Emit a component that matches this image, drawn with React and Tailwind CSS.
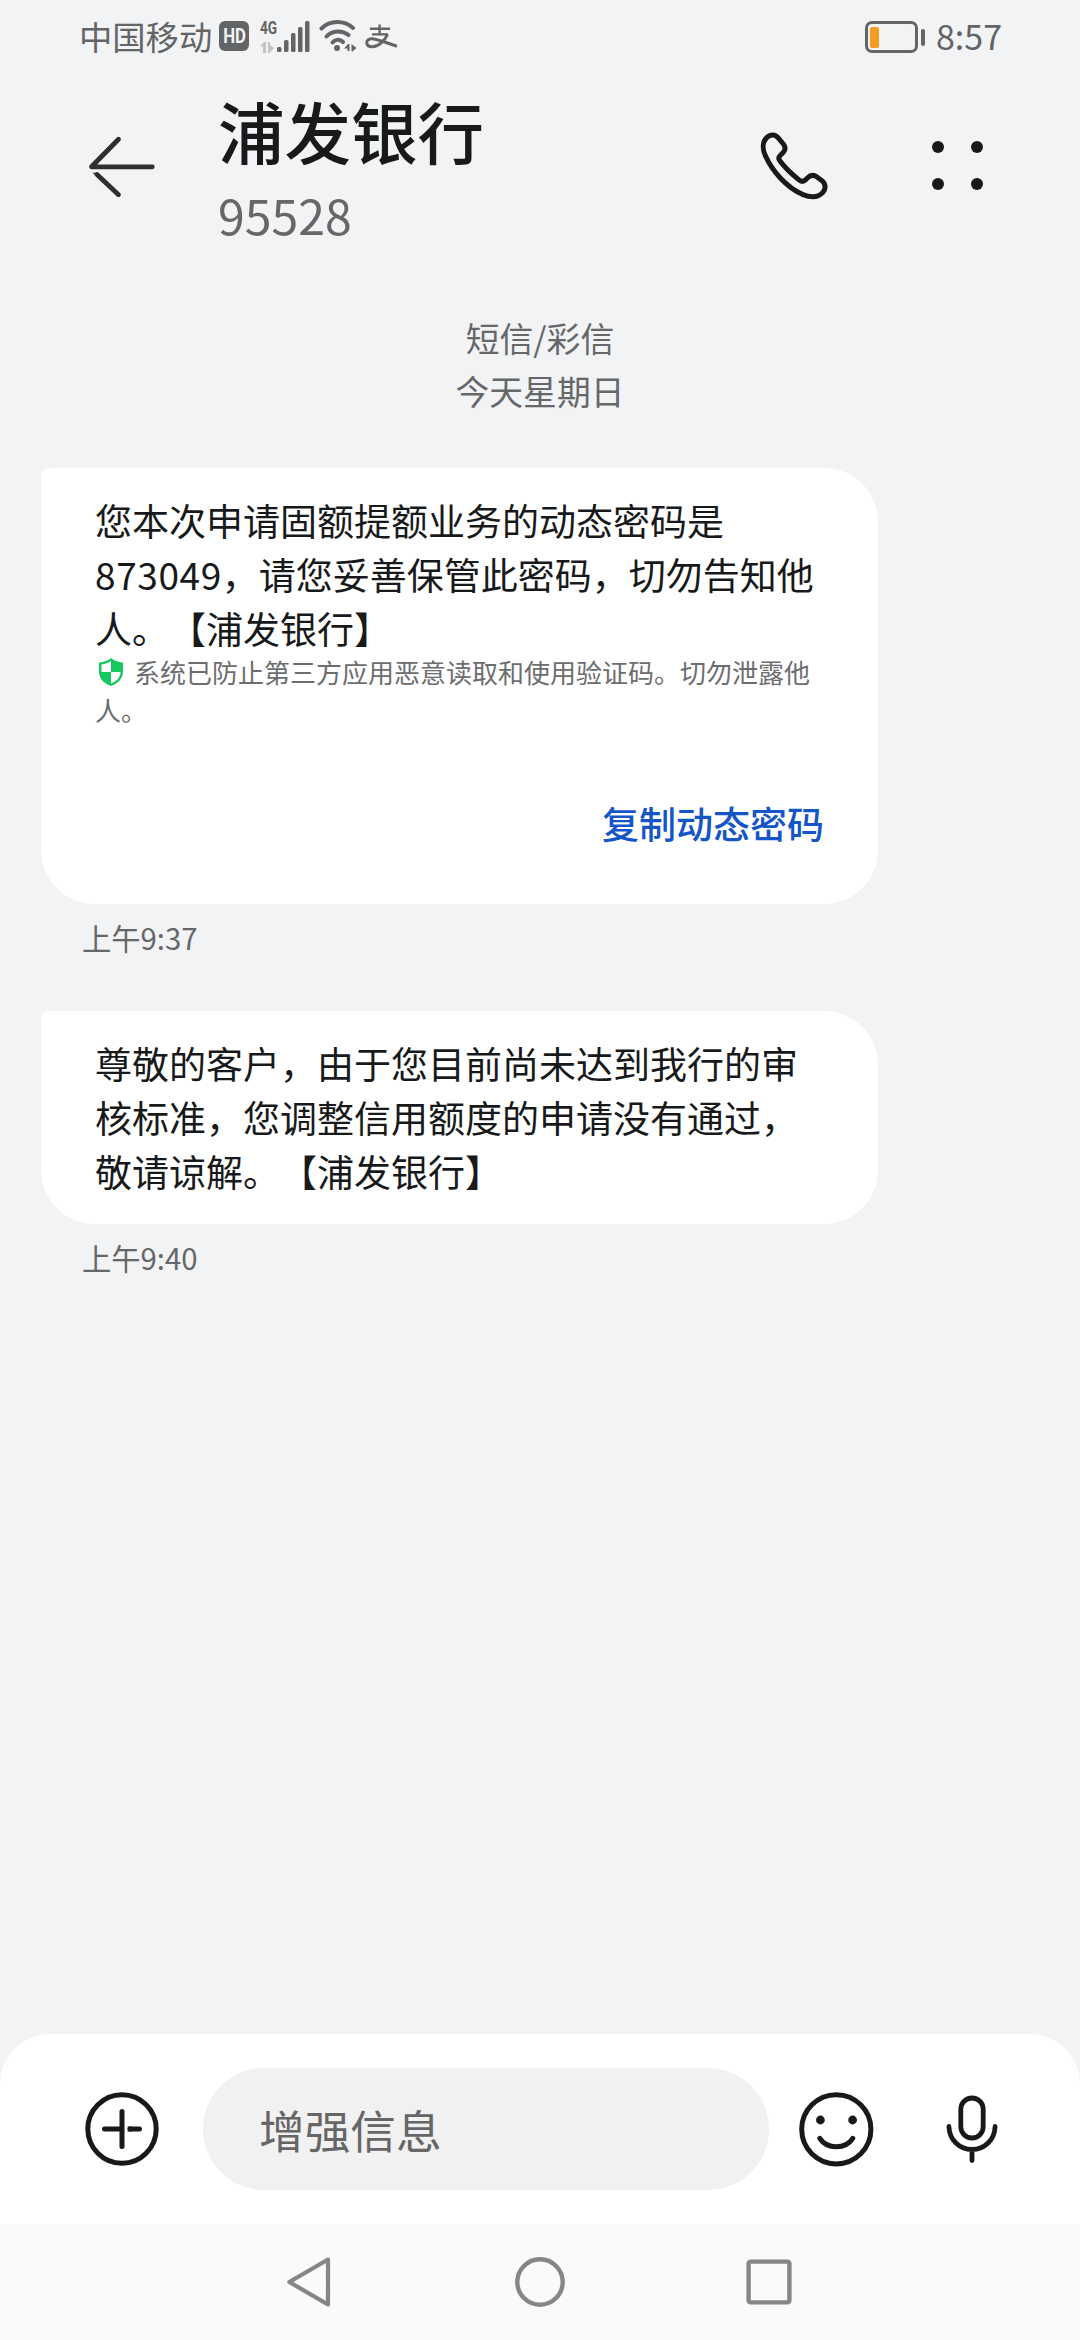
import React from 'react';

const messages = [
    {
        id: 1,
        lines: [
            '您本次申请固额提额业务的动态密码是',
            <><span className="tracking-[0.6px]">873049</span>，请您妥善保管此密码，切勿告知他</>,
            '人。【浦发银行】'
        ],
        notice: ['系统已防止第三方应用恶意读取和使用验证码。切勿泄露他', '人。'],
        action: '复制动态密码',
        time: '上午9:37'
    },
    {
        id: 2,
        lines: ['尊敬的客户，由于您目前尚未达到我行的审', '核标准，您调整信用额度的申请没有通过，', '敬请谅解。【浦发银行】'],
        time: '上午9:40'
    }
];

function StatusBar() {
    return (
        <div className="h-[74px] pl-[79px] pr-[78px] flex items-center text-[#636466]">
            <span className="-mt-[3px] text-[33.3px] leading-none whitespace-nowrap">中国移动</span>
            <span className="ml-[7px] -mt-[2px] w-[30px] h-[30px] rounded-[6px] bg-[#636466] flex items-center justify-center text-[#f1f3f5]">
                <span className="text-[20px] leading-none font-bold font-['Roboto',sans-serif] scale-x-[0.84]">HD</span>
            </span>

            {/* Mobile signal */}
            <span className="ml-[11px] w-[17px] h-[32px] flex flex-col justify-between -mt-[1px]">
                <span className="text-[18.5px] leading-[15px] font-bold font-['Roboto',sans-serif] origin-left scale-x-[0.74]">4G</span>
                <svg className="w-[14px] h-[11px]" viewBox="0 0 14 11" fill="#c2c3c4">
                    <path d="M0 4.5 L4 0 H6 V11 H3 V4.5 Z M8 0 H10 V3 L14 6 L9.5 11 H8 Z" />
                </svg>
            </span>
            <svg className="w-[34px] h-[31px] -mt-[1px]" viewBox="0 0 34 31" fill="currentColor">
                <rect x="0" y="26" width="4.5" height="5" rx="1.5" />
                <rect x="7" y="19" width="4.5" height="12" rx="1.5" />
                <rect x="14" y="12" width="4.5" height="19" rx="1.5" />
                <rect x="21" y="6" width="4.5" height="25" rx="1.5" />
                <rect x="28" y="0" width="4.5" height="31" rx="1.5" />
            </svg>

            {/* Wifi */}
            <svg className="ml-[8px] w-[38px] h-[32px] -mt-[2px]" viewBox="0 0 38 32" fill="none" stroke="currentColor" strokeWidth="4" strokeLinecap="round">
                <path d="M2.5 8.5 C11 0 25 0 34 8" />
                <path d="M7.5 16.5 C13.5 10 23 10 29.5 15" />
                <path d="M13.5 22.5 C16.5 19 21 19 24 22" />
                <circle cx="18" cy="28" r="3" fill="currentColor" stroke="none" />
                <path d="M25 28.5 L29 24 H30.5 V31 H28.5 V28.5 Z M32.5 24 L37.5 28 L33.5 31.5 H32.5 Z" fill="currentColor" stroke="none" />
            </svg>

            {/* Alipay */}
            <svg className="ml-[8px] w-[33px] h-[26px]" viewBox="0 0 33 26" fill="none" stroke="currentColor" strokeWidth="2.4">
                <path d="M5 4.8 H25 M14.6 0.5 V10 M7 10.4 H23" />
                <path d="M22.5 10.5 C20 16 14 22.5 7.5 22.8 C0 23 0 15 6.5 14.7 C12 14.6 20 18.5 32 22.2" strokeWidth="3" />
            </svg>

            <span className="ml-auto flex items-center">
                <span className="w-[53px] h-[32px] border-[3px] border-[#636466] rounded-[7px] flex items-center pl-[2px]">
                    <span className="w-[9px] h-[21px] rounded-[2px] bg-[#f59a23]" />
                </span>
                <span className="ml-[3px] w-[4px] h-[17px] rounded-[2px] bg-[#636466]" />
                <span className="ml-[11px] -mt-[2px] text-[34px] leading-none">8:57</span>
            </span>
        </div>
    );
}

function Header() {
    return (
        <header className="h-[186px] pl-[86px] pr-[97px] flex items-start text-[#18191a]">
            <svg className="mt-[60px] w-[72px] h-[66px]" viewBox="86 134 72 66" fill="none" stroke="#2d2f31" strokeWidth="4.8" strokeLinecap="round" strokeLinejoin="round">
                <path d="M118.5 139.3 L91.5 166.8 H152.3" />
                <path d="M97 174.5 L118.5 194.7" />
                <path d="M92.5 172.8 H98 L101 176 L98 177.5 Z" fill="#2d2f31" stroke="none" />
            </svg>
            <div className="ml-[60px]">
                <h1 className="mt-[11px] text-[66.5px] leading-[90px] font-medium">浦发银行</h1>
                <p className="mt-[6px] text-[48.2px] leading-[66px] text-[#666769]">95528</p>
            </div>
            <svg className="ml-auto mt-[57px] w-[70px] h-[70px]" viewBox="88 94 210 210" fill="none" stroke="currentColor" strokeWidth="15" strokeLinejoin="round">
                <path d="M130 106 C136 106 140 108 145 114 L161 133 C168 142 168 150 161 158 L151 168 C146 173 147 179 151 184 C166 204 186 223 207 240 C215 247 222 246 228 240 L234 234 C242 226 250 225 259 230 L277 243 C289 253 289 268 279 279 C264 295 242 294 218 284 C170 262 128 215 108 170 C98 150 98 128 110 115 C116 108 122 106 130 106 Z" />
            </svg>
            <div className="ml-[103px] mt-[67px] grid grid-cols-2 gap-x-[27px] gap-y-[25px]">
                {[0, 1, 2, 3].map(dot => (
                    <span key={dot} className="w-[12px] h-[12px] rounded-full bg-[#18191a]" />
                ))}
            </div>
        </header>
    );
}

function ShieldIcon() {
    return (
        <svg className="w-[24px] h-[28px]" viewBox="0 0 24 28">
            <path d="M12 0 C15 2.5 19 4 24 4.5 V14 C24 21 18 26 12 28 C6 26 0 21 0 14 V4.5 C5 4 9 2.5 12 0 Z" fill="#16c95f" />
            <path d="M12 3 V14 H2.5 V6.5 C6 6 9.5 5 12 3 Z" fill="#fff" />
            <path d="M12 14 H21.5 C21.5 19.5 17.5 23.3 12 25.5 Z" fill="#fff" />
        </svg>
    );
}

function Message({ message }) {
    return (
        <div>
            <div className="ml-[41px] w-[837px] pt-[25px] pb-[26px] px-[54px] bg-white rounded-[54px] rounded-tl-[8px]">
                <p className="text-[37px] leading-[54px] text-[#18191a] whitespace-nowrap">
                    {message.lines.map((line, i) => (
                        <span key={i} className="block">{line}</span>
                    ))}
                </p>
                {message.notice && (
                    <div className="-mt-[2px] text-[26px] leading-[38px] text-[#6c6d6f] whitespace-nowrap">
                        <p className="flex items-center pl-[4px] gap-[11px]">
                            <ShieldIcon />
                            {message.notice[0]}
                        </p>
                        <p>{message.notice[1]}</p>
                    </div>
                )}
                {message.action && (
                    <button className="block ml-auto mt-[67px] mb-[28px] text-[37px] leading-[54px] font-medium text-[#1455c8]">
                        {message.action}
                    </button>
                )}
            </div>
            <p className="ml-[82px] mt-[13px] text-[29.3px] leading-[40px] text-[#666769]">{message.time}</p>
        </div>
    );
}

function Composer() {
    return (
        <div className="h-[190px] pl-[82px] pr-[78px] bg-white rounded-t-[50px] flex items-center text-[#18191a]">
            <svg className="w-[80px] h-[80px]" viewBox="0 0 80 80" fill="none" stroke="currentColor" strokeWidth="5" strokeLinecap="round">
                <circle cx="40" cy="40" r="34.2" />
                <path d="M40 22.5 V57.5 M22.5 40 H38 M57.5 40 H48" />
                <path d="M45.7 40 H50" strokeLinecap="butt" />
            </svg>
            <div className="ml-[41px] w-[566px] h-[122px] pl-[56px] rounded-full bg-[#f1f1f1] flex items-center text-[45.7px] text-[#666]">
                增强信息
            </div>
            <svg className="ml-[27px] w-[80px] h-[80px]" viewBox="0 0 80 80" fill="none" stroke="currentColor" strokeWidth="5" strokeLinecap="round">
                <circle cx="40.3" cy="40.3" r="34.6" />
                <circle cx="24.4" cy="31" r="4.4" fill="currentColor" stroke="none" />
                <circle cx="56.6" cy="31" r="4.4" fill="currentColor" stroke="none" />
                <path d="M23.8 49.3 C31 60.5 49.5 60.5 56.8 49.3" />
            </svg>
            <svg className="ml-auto w-[60px] h-[80px]" viewBox="941.6 2089 60 80" fill="none" stroke="currentColor" strokeWidth="4.8" strokeLinecap="round">
                <rect x="960.4" y="2098" width="22.4" height="40" rx="11.2" />
                <path d="M948.5 2126.5 C949 2140 959 2149.5 971.6 2149.5 C984.2 2149.5 994.2 2140 994.7 2126.5 M971.6 2150 V2160.5" />
            </svg>
        </div>
    );
}

function NavBar() {
    return (
        <nav className="h-[116px] bg-[#fafafa] flex items-center justify-center gap-[172px]">
            <svg className="w-[58px] h-[58px]" viewBox="0 0 58 58" fill="none" stroke="#868686" strokeWidth="4.2" strokeLinejoin="round">
                <path d="M47 6.5 L8.3 29 L47 51.5 Z" />
            </svg>
            <svg className="w-[58px] h-[58px]" viewBox="0 0 58 58" fill="none" stroke="#868686" strokeWidth="4.4">
                <circle cx="29" cy="29" r="22.7" />
            </svg>
            <svg className="w-[58px] h-[58px]" viewBox="0 0 58 58" fill="none" stroke="#868686" strokeWidth="4.4">
                <rect x="7.6" y="8.6" width="40.8" height="40.8" rx="2" />
            </svg>
        </nav>
    );
}

export default function App() {
    return (
        <div className="w-[1080px] h-[2340px] flex flex-col overflow-hidden bg-[#f1f3f5] font-['Noto_Sans_CJK_SC',sans-serif] [text-spacing-trim:space-all]" lang="zh-CN">
            <StatusBar />
            <Header />
            <main className="flex-1 pt-[51px]">
                <div className="text-center text-[33.8px] leading-[53px] text-[#666769]">
                    <p>短信/彩信</p>
                    <p>今天星期日</p>
                </div>
                <div className="mt-[51px] flex flex-col gap-[54px]">
                    {messages.map(message => (
                        <Message key={message.id} message={message} />
                    ))}
                </div>
            </main>
            <Composer />
            <NavBar />
        </div>
    );
}
